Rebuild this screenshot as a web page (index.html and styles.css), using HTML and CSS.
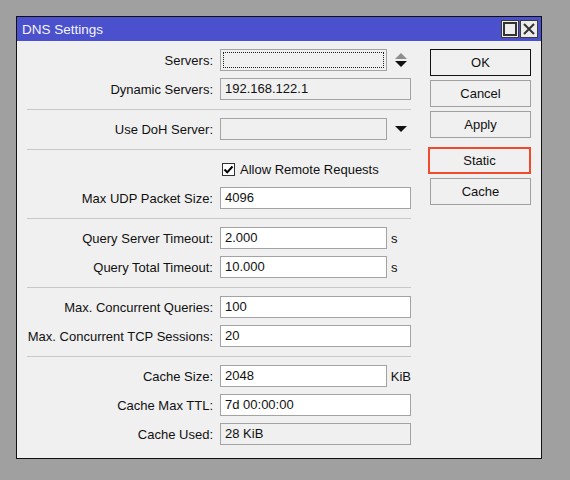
FILE: index.html
```html
<!DOCTYPE html>
<html lang="en">
<head>
    <meta charset="UTF-8">
    <title>DNS Settings</title>
    <link rel="stylesheet" href="styles.css">
</head>
<body>
    <div class="window">
        <div class="titlebar">
            <span class="title">DNS Settings</span>
            <div class="title-buttons">
                <span class="tbtn">
                    <svg width="16" height="16" viewBox="0 0 16 16"><rect x="2" y="2" width="12" height="12" fill="none" stroke="#333" stroke-width="2"/></svg>
                </span>
                <span class="tbtn">
                    <svg width="16" height="16" viewBox="0 0 16 16"><path d="M3 3 L13 13 M13 3 L3 13" stroke="#333" stroke-width="2"/></svg>
                </span>
            </div>
        </div>
        <div class="content">
            <div class="form">
                <div class="row">
                    <label>Servers:</label>
                    <div class="field">
                        <div class="input short ro focus"></div>
                        <svg class="spin" width="12" height="16" viewBox="0 0 12 16"><path d="M6 1 L12 7 L0 7 Z" fill="#8e8e8e"/><path d="M0 9 L12 9 L6 15 Z" fill="#111"/></svg>
                    </div>
                </div>
                <div class="row">
                    <label>Dynamic Servers:</label>
                    <div class="field"><div class="input ro">192.168.122.1</div></div>
                </div>
                <div class="sep"></div>
                <div class="row">
                    <label>Use DoH Server:</label>
                    <div class="field">
                        <div class="input short ro"></div>
                        <svg class="drop" width="12" height="7" viewBox="0 0 12 7"><path d="M0 0 L12 0 L6 6 Z" fill="#111"/></svg>
                    </div>
                </div>
                <div class="sep"></div>
                <div class="row">
                    <span></span>
                    <div class="field">
                        <span class="check">
                            <svg width="11" height="11" viewBox="0 0 11 11"><path d="M1.5 5.5 L4.2 8.3 L9.5 2.5" fill="none" stroke="#000" stroke-width="2"/></svg>
                        </span>
                        <span class="check-text">Allow Remote Requests</span>
                    </div>
                </div>
                <div class="row">
                    <label>Max UDP Packet Size:</label>
                    <div class="field"><div class="input">4096</div></div>
                </div>
                <div class="sep"></div>
                <div class="row">
                    <label>Query Server Timeout:</label>
                    <div class="field"><div class="input short">2.000</div><span class="unit">s</span></div>
                </div>
                <div class="row">
                    <label>Query Total Timeout:</label>
                    <div class="field"><div class="input short">10.000</div><span class="unit">s</span></div>
                </div>
                <div class="sep"></div>
                <div class="row">
                    <label>Max. Concurrent Queries:</label>
                    <div class="field"><div class="input">100</div></div>
                </div>
                <div class="row">
                    <label>Max. Concurrent TCP Sessions:</label>
                    <div class="field"><div class="input">20</div></div>
                </div>
                <div class="sep"></div>
                <div class="row">
                    <label>Cache Size:</label>
                    <div class="field"><div class="input short">2048</div><span class="unit">KiB</span></div>
                </div>
                <div class="row">
                    <label>Cache Max TTL:</label>
                    <div class="field"><div class="input">7d 00:00:00</div></div>
                </div>
                <div class="row">
                    <label>Cache Used:</label>
                    <div class="field"><div class="input ro">28 KiB</div></div>
                </div>
            </div>
            <div class="buttons">
                <a class="button default">OK</a>
                <a class="button">Cancel</a>
                <a class="button">Apply</a>
                <a class="button marked">Static</a>
                <a class="button">Cache</a>
            </div>
        </div>
    </div>
</body>
</html>
```

FILE: styles.css
```css
* {
    box-sizing: border-box;
}
body {
    margin: 0;
    height: 480px;
    background-color: #a0a0a0;
    font-family: "Liberation Sans", Arial, sans-serif;
    font-size: 13px;
    color: #111;
    overflow: hidden;
}
.window {
    margin: 16px 0 0 16px;
    width: 526px;
    border: 1px solid #111;
    background-color: #f0f0f0;
}
.titlebar {
    height: 24px;
    background-color: #4b50cc;
    display: flex;
    align-items: center;
    justify-content: space-between;
    padding: 0 3px 0 5px;
}
.title {
    color: #f4f4ff;
    font-size: 13.5px;
}
.title-buttons {
    display: flex;
    gap: 1px;
}
.tbtn {
    width: 18px;
    height: 18px;
    border: 1px solid #3a3a3a;
    background-color: #ececec;
    display: flex;
    align-items: center;
    justify-content: center;
}
.content {
    display: flex;
    padding: 8px 10px 13px 10px;
}
.form {
    width: 384px;
    display: flex;
    flex-direction: column;
    gap: 7px;
}
.row {
    display: grid;
    grid-template-columns: 186px 191px;
    column-gap: 7px;
    height: 22px;
    align-items: center;
}
.row label {
    text-align: right;
    white-space: nowrap;
}
.field {
    display: flex;
    align-items: center;
    height: 22px;
}
.input {
    width: 100%;
    height: 22px;
    border: 1px solid #a3a3a3;
    background-color: #fff;
    padding: 0 4px;
    line-height: 20px;
    white-space: nowrap;
}
.input.short {
    width: 167px;
}
.input.ro {
    background-color: #f0f0f0;
}
.input.focus {
    position: relative;
}
.input.focus::after {
    content: "";
    position: absolute;
    top: 2px;
    left: 2px;
    right: 2px;
    bottom: 2px;
    border: 1px dotted #222;
}
.spin {
    margin-left: 8px;
}
.drop {
    margin-left: 8px;
}
.unit {
    margin-left: 4px;
}
.sep {
    height: 1px;
    background-color: #c8c8c8;
    margin: 2px 0 1px;
}
.check {
    width: 13px;
    height: 13px;
    margin-left: 2px;
    border: 1px solid #333;
    background-color: #fff;
    display: flex;
    align-items: center;
    justify-content: center;
}
.check-text {
    margin-left: 5px;
}
.buttons {
    margin-left: 19px;
    width: 101px;
    display: flex;
    flex-direction: column;
    gap: 4px;
}
.button {
    height: 27px;
    border: 1px solid #a0a0a0;
    background-color: #f0f0f0;
    display: flex;
    align-items: center;
    justify-content: center;
}
.button.default {
    border-color: #111;
}
.button.marked {
    margin: 5px 0 0 -2px;
    width: 103px;
    border: 2px solid #f24a2c;
}
```
